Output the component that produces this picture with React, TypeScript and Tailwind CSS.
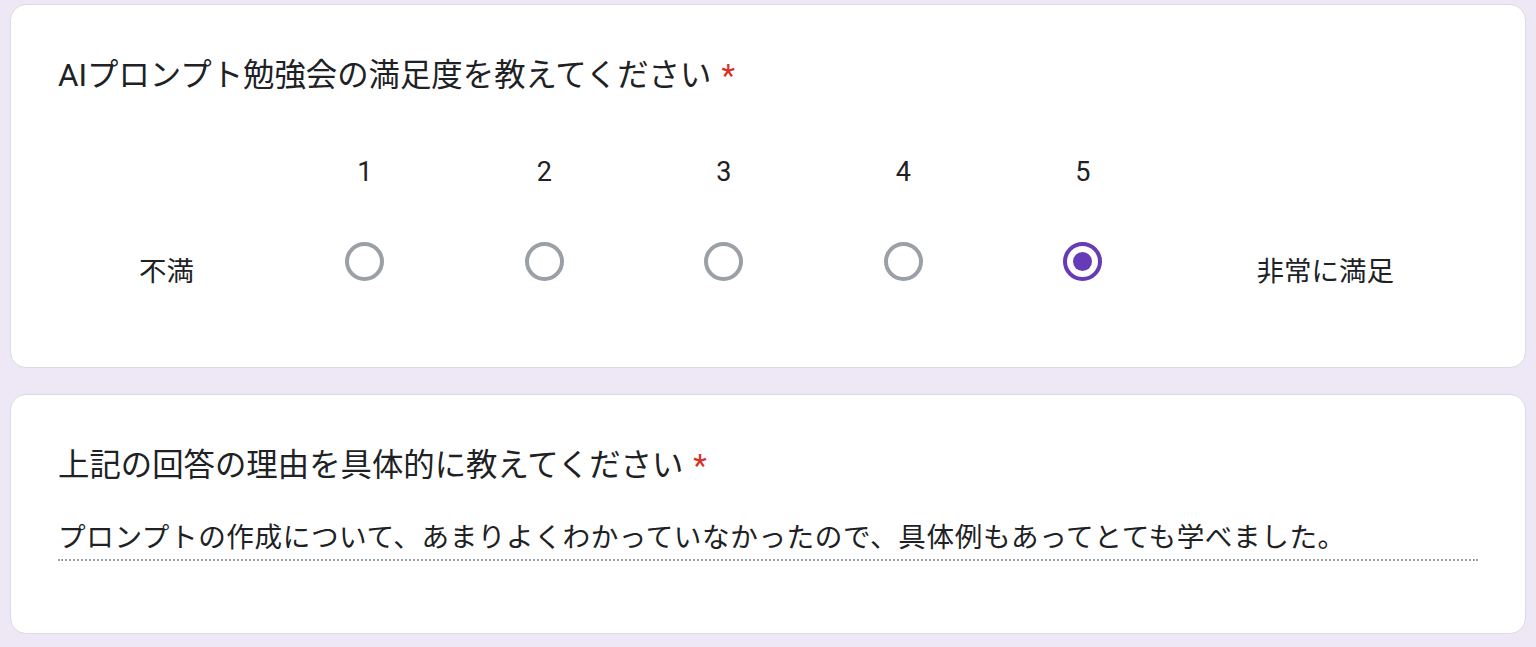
import React from "react";

const font = { fontFamily: "Roboto, 'Noto Sans CJK JP', sans-serif" };

function Radio({ checked }: { checked?: boolean }) {
  return checked ? (
    <span className="grid h-[39px] w-[39px] place-items-center rounded-full border-[4px] border-[#673ab7]">
      <span className="h-[19px] w-[19px] rounded-full bg-[#673ab7]" />
    </span>
  ) : (
    <span className="block h-[39px] w-[39px] rounded-full border-[4px] border-[#9aa0a6]" />
  );
}

function Title({ text }: { text: string }) {
  return (
    <h2 className="text-[31.4px] leading-[47px] font-normal text-[#202124]">
      {text}
      <span className="ml-[10px] text-[#d93025]">*</span>
    </h2>
  );
}

export default function App() {
  return (
    <div className="min-h-screen bg-[#ede7f6] px-[10px] pt-[4px]" style={font}>
      <section className="h-[364px] rounded-[16px] border border-[#dadce0] bg-white px-[47px] pt-[47px]">
        <Title text="AIプロンプト勉強会の満足度を教えてください" />
        <div className="mt-[49px] flex">
          <div className="w-[217px] pt-[104px] text-center text-[27.5px] leading-[40px] text-[#202124]">不満</div>
          {[1, 2, 3, 4, 5].map((n) => (
            <div key={n} className="flex w-[179.5px] flex-col items-center">
              <div className="h-[48px] text-[27px] leading-[48px] text-[#202124]">{n}</div>
              <div className="mt-[46px]">
                <Radio checked={n === 5} />
              </div>
            </div>
          ))}
          <div className="flex-1 pt-[104px] text-center text-[27.5px] leading-[40px] text-[#202124]">非常に満足</div>
        </div>
      </section>
      <section className="mt-[26px] h-[240px] rounded-[16px] border border-[#dadce0] bg-white px-[47px] pt-[47px]">
        <Title text="上記の回答の理由を具体的に教えてください" />
        <div className="mt-[27px] border-b-2 border-dotted border-[#9aa0a6] text-[27.6px] leading-[43px] tracking-[0.6px] text-[#202124]">
          プロンプトの作成について、あまりよくわかっていなかったので、具体例もあってとても学べました。
        </div>
      </section>
    </div>
  );
}
